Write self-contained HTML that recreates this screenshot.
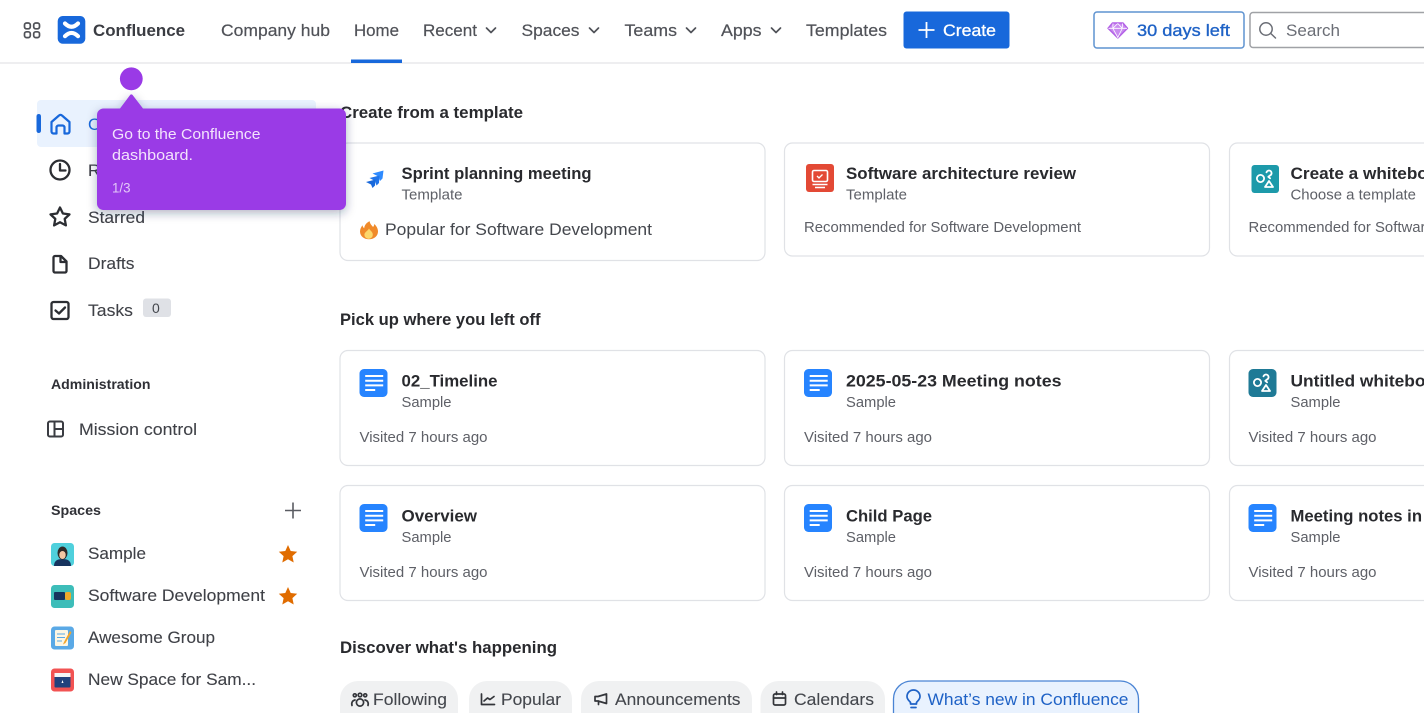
<!DOCTYPE html>
<html><head><meta charset="utf-8"><title>Confluence</title>
<style>
html,body{margin:0;padding:0;background:#fff;overflow:hidden;width:1424px;height:713px}
svg{display:block;filter:blur(.35px)}
text{font-family:"Liberation Sans",sans-serif;font-size:16.5px;fill:#44474d;white-space:pre}
.n{fill:#505258;font-size:17px;stroke:#505258;stroke-width:.2}
.b{font-weight:bold;fill:#292a2e;font-size:16.5px}
.s{fill:#5e6067;font-size:14.5px}
.v{fill:#5e6067;font-size:14.5px}
.m{fill:#3f4147;font-size:17px;stroke:#3f4147;stroke-width:.1}
.h{font-weight:bold;fill:#2f3036;font-size:13.5px}
.c{fill:#44474d;font-size:17px;stroke:#44474d;stroke-width:.1}
.i{fill:none;stroke:#2c2e33;stroke-width:2.300;stroke-linejoin:round;stroke-linecap:round}
.k{fill:none;stroke:#505258;stroke-width:1.700;stroke-linecap:round;stroke-linejoin:round}
.p{fill:#fff;stroke:#e0e2e6;stroke-width:1.200}
.l{fill:none;stroke:#33353a;stroke-width:1.700;stroke-linejoin:round;stroke-linecap:round}
</style></head><body>
<svg width="1424" height="713" viewBox="0 0 1424 713" xmlns="http://www.w3.org/2000/svg">
<defs>
<filter id="sh" x="-20%" y="-20%" width="140%" height="150%"><feDropShadow dx="0" dy="3" stdDeviation="5" flood-color="#1e2a55" flood-opacity=".35"/></filter>
<g id="doc"><rect width="28" height="28" rx="4.500" fill="#2684ff"/><path d="M5.700 7h18M5.700 11.700h18M5.700 16.400h18M5.700 21h10" stroke="#fff" stroke-width="2" fill="none"/></g>
<g id="wb" fill="none" stroke="#fff" stroke-width="1.800" stroke-linejoin="round" stroke-linecap="round"><circle cx="9" cy="13.500" r="3.600"/><path d="M15 7.300a2.600 2.600 0 1 1 3.500 3.200l-1.700 1.300 1.800 1.500"/><path d="M17.500 16l4 6h-8z"/></g>
</defs>

<!-- header -->
<rect x="0" y="62.500" width="1424" height="1" fill="#dcdee2"/>
<g fill="none" stroke="#505258" stroke-width="1.700"><rect x="24.500" y="23" width="5.800" height="5.800" rx="2"/><rect x="33.700" y="23" width="5.800" height="5.800" rx="2"/><rect x="24.500" y="31.800" width="5.800" height="5.800" rx="2"/><rect x="33.700" y="31.800" width="5.800" height="5.800" rx="2"/></g>
<rect x="57.700" y="16" width="27.600" height="27.700" rx="5" fill="#1868db"/>
<path d="M65 23.500Q71.500 30 78 23.500M65 36.200Q71.500 29.700 78 36.200" fill="none" stroke="#fff" stroke-width="4.200" stroke-linecap="round"/>
<text x="93" y="36" textLength="92" lengthAdjust="spacingAndGlyphs" style="font-weight:bold;font-size:17px;fill:#3a3c42">Confluence</text>
<text class="n" x="221" y="36" textLength="109" lengthAdjust="spacingAndGlyphs">Company hub</text>
<text class="n" x="354" y="36" textLength="45" lengthAdjust="spacingAndGlyphs">Home</text>
<rect x="351" y="59.500" width="51" height="3.500" fill="#1868db"/>
<text class="n" x="423" y="36" textLength="54" lengthAdjust="spacingAndGlyphs">Recent</text>
<path class="k" d="M486.500 28l4.500 4.500 4.500-4.500"/>
<text class="n" x="521.500" y="36" textLength="58" lengthAdjust="spacingAndGlyphs">Spaces</text>
<path class="k" d="M589.500 28l4.500 4.500 4.500-4.500"/>
<text class="n" x="624.500" y="36" textLength="52.500" lengthAdjust="spacingAndGlyphs">Teams</text>
<path class="k" d="M686.500 28l4.500 4.500 4.500-4.500"/>
<text class="n" x="721" y="36" textLength="40.500" lengthAdjust="spacingAndGlyphs">Apps</text>
<path class="k" d="M771.500 28l4.500 4.500 4.500-4.500"/>
<text class="n" x="806" y="36" textLength="81" lengthAdjust="spacingAndGlyphs">Templates</text>
<rect x="903.500" y="11.500" width="106" height="37" rx="3" fill="#1868db"/>
<path d="M926.500 22v16M918.500 30h16" stroke="#fff" stroke-width="1.800" fill="none"/>
<text x="943" y="36" textLength="53" lengthAdjust="spacingAndGlyphs" style="fill:#fff;font-size:17px;stroke:#fff;stroke-width:.3">Create</text>
<rect x="1094" y="12" width="150" height="36" rx="3" fill="#fff" stroke="#5f93d0" stroke-width="1.500"/>
<path d="M1112.500 23h10.500l4.500 5.300-9.700 9.700-9.800-9.700z" fill="#c98af0" stroke="#b25fe6" stroke-width="1.400" stroke-linejoin="round"/>
<path d="M1108.500 28.300h18.500M1113 23.500l-.2 4.800 5 9.200 4.500-9.200.2-4.800M1117.800 23.500l-5 4.800M1117.800 23.500l4.500 4.800" fill="none" stroke="#fff" stroke-width=".8"/>
<text x="1137" y="36" textLength="93" lengthAdjust="spacingAndGlyphs" style="fill:#1f62c6;font-size:17px;stroke:#1f62c6;stroke-width:.35">30 days left</text>
<rect x="1250" y="12.500" width="190" height="35" rx="3" fill="#fff" stroke="#a0a2a6" stroke-width="1.500"/>
<circle cx="1266" cy="29" r="6.200" fill="none" stroke="#6b6e76" stroke-width="1.500"/><path d="M1270.800 33.500l4.700 4.500" stroke="#6b6e76" stroke-width="1.500" stroke-linecap="round"/>
<text x="1286" y="36" textLength="54" lengthAdjust="spacingAndGlyphs" style="fill:#6b6e76;font-size:17px">Search</text>

<!-- sidebar -->
<rect x="37" y="100" width="279" height="47" rx="4" fill="#e9f2fe"/>
<rect x="36.500" y="114" width="4.500" height="19" rx="2.200" fill="#1868db"/>
<path d="M51.500 122l7.500-6.500a2.200 2.200 0 0 1 3 0l7.500 6.500v9.500a2 2 0 0 1-2 2H64.500v-6a2 2 0 0 0-2-2h-4a2 2 0 0 0-2 2v6h-3a2 2 0 0 1-2-2z" fill="none" stroke="#1868db" stroke-width="2.200" stroke-linejoin="round"/>
<text x="88" y="130" style="fill:#1868db;font-size:17px">O</text>
<circle cx="60" cy="170" r="9.500" class="i"/><path class="i" d="M60 164v6.500h5.500"/>
<text class="m" x="88" y="176">R</text>
<path class="i" d="M60 207.500l2.900 6 6.600.9-4.800 4.500 1.200 6.500-5.900-3.200-5.900 3.200 1.200-6.500-4.800-4.500 6.600-.9z"/>
<text class="m" x="88" y="223" textLength="57" lengthAdjust="spacingAndGlyphs">Starred</text>
<path class="i" d="M53.500 257.500a1.500 1.500 0 0 1 1.500-1.500h6l5.500 5.500v9.500a1.500 1.500 0 0 1-1.500 1.500h-10a1.500 1.500 0 0 1-1.500-1.500zM60.500 256.500v5.500h5.500"/>
<text class="m" x="88" y="269" textLength="46.500" lengthAdjust="spacingAndGlyphs">Drafts</text>
<rect class="i" x="51.500" y="302" width="17" height="17" rx="2"/><path class="i" d="M55.500 310.500l3.500 3 6-6"/>
<text class="m" x="88" y="316" textLength="45" lengthAdjust="spacingAndGlyphs">Tasks</text>
<rect x="143" y="298.500" width="28" height="18.500" rx="3" fill="#dfe1e6"/>
<text x="152" y="313" style="font-size:14px;fill:#44474d">0</text>
<text class="h" x="51" y="389" textLength="99.500" lengthAdjust="spacingAndGlyphs">Administration</text>
<g fill="none" stroke="#3a3c42" stroke-width="2"><rect x="48" y="421.500" width="15" height="15" rx="1.800"/><path d="M54.500 421.500v15M54.500 429H63"/></g>
<text class="m" x="79" y="435" textLength="118" lengthAdjust="spacingAndGlyphs">Mission control</text>
<text class="h" x="51" y="515" textLength="50" lengthAdjust="spacingAndGlyphs">Spaces</text>
<path d="M293 502.500v16M285 510.500h16" stroke="#5a5c62" stroke-width="1.600" fill="none"/>

<!-- spaces -->
<rect x="51" y="543" width="23" height="23" rx="3.500" fill="#4fd0dc"/>
<path d="M54 566c0-5 3-7 8.500-7s8.500 2 8.500 7z" fill="#17335e"/><ellipse cx="62.500" cy="553" rx="5" ry="6.500" fill="#2e2a28"/><ellipse cx="62.500" cy="555" rx="3.200" ry="4" fill="#f2c7a3"/>
<text class="m" x="88" y="559" textLength="58" lengthAdjust="spacingAndGlyphs">Sample</text>
<path d="M288 545l2.700 6 6.500.7-4.800 4.400 1.300 6.400-5.700-3.300-5.700 3.300 1.300-6.400-4.800-4.400 6.500-.7z" fill="#e06c00"/>
<rect x="51" y="585" width="23" height="23" rx="3.500" fill="#3dbdb9"/>
<rect x="54" y="592" width="11" height="8" rx="1" fill="#17335e"/><rect x="65" y="592" width="6" height="8" rx="2" fill="#f0a92a"/>
<text class="m" x="88" y="601" textLength="177" lengthAdjust="spacingAndGlyphs">Software Development</text>
<path d="M288 587l2.700 6 6.500.7-4.800 4.400 1.300 6.400-5.700-3.300-5.700 3.300 1.300-6.400-4.800-4.400 6.500-.7z" fill="#e06c00"/>
<rect x="51" y="626.500" width="23" height="23" rx="3.500" fill="#5aa9e6"/>
<rect x="55" y="630" width="13" height="16" rx="1" fill="#fdf6e3"/><path d="M57 634h8M57 637.500h8M57 641h5" stroke="#5aa9e6" stroke-width="1"/><path d="M70 631l-6 11-1 2.500 2.500-1.500 6-10.500z" fill="#f2a52b"/>
<text class="m" x="88" y="643" textLength="127" lengthAdjust="spacingAndGlyphs">Awesome Group</text>
<rect x="51" y="668.500" width="23" height="23" rx="3.500" fill="#f25353"/>
<rect x="54.500" y="673" width="16" height="14.500" rx="1" fill="#22427d"/><rect x="54.500" y="673" width="16" height="4" fill="#f4f5f7"/><path d="M62.500 680l-1 3h2z" fill="#fff"/>
<text class="m" x="88" y="685" textLength="168" lengthAdjust="spacingAndGlyphs">New Space for Sam...</text>

<!-- sections -->
<text class="b" x="340" y="118" textLength="183" lengthAdjust="spacingAndGlyphs">Create from a template</text>
<text class="b" x="340" y="325" textLength="200.500" lengthAdjust="spacingAndGlyphs">Pick up where you left off</text>
<text class="b" x="340" y="653" textLength="217" lengthAdjust="spacingAndGlyphs">Discover what's happening</text>

<!-- row 1 -->
<rect class="p" x="340" y="143" width="425" height="117.500" rx="8"/>
<rect class="p" x="784.500" y="143" width="425" height="113" rx="8"/>
<rect class="p" x="1229.500" y="143" width="300" height="113" rx="8"/>
<path d="M372.500 173.500l11-3-1 8-2.500 2.500-1.500-4.500z" fill="#2e8bff"/>
<path d="M369.500 178l10-2.500-.5 7.500-2.500 2.500-1.500-4.500z" fill="#1f74ea"/>
<path d="M366 182l9.500-2.500-.5 6-2.500 2.500-1.500-3.500z" fill="#1868db"/>
<text class="b" x="401.500" y="179" textLength="190" lengthAdjust="spacingAndGlyphs">Sprint planning meeting</text>
<text class="s" x="401.500" y="199.500" textLength="61" lengthAdjust="spacingAndGlyphs">Template</text>
<path d="M369.500 221c.5 3 2.500 4.500 3.500 6 .8-.8 1.200-1.800 1.300-3 2.200 2 3.700 4.500 3.700 7.500 0 4.500-4 7.800-9 7.800s-9-3.300-9-7.800c0-2.500 1.200-4.500 2.500-6.300.2 1.300.7 2.300 1.700 3 .3-3.200 2.300-5.500 5.800-7.200z" fill="#f08a2a"/>
<path d="M369 228.500c1 2 3.800 3.300 3.800 6.200a4.200 4.200 0 0 1-8.400 0c0-2.500 3.100-3.500 4.600-6.200z" fill="#fcd76a"/>
<text x="385" y="235" textLength="267" lengthAdjust="spacingAndGlyphs" style="font-size:17px;fill:#44474d">Popular for Software Development</text>

<rect x="806" y="164" width="28" height="28" rx="3" fill="#e34935"/>
<rect x="812.500" y="170.500" width="15" height="11" rx="1.500" fill="none" stroke="#fff" stroke-width="1.600"/><path d="M817 176l2 2 3.500-3.500" stroke="#fff" stroke-width="1.300" fill="none"/><path d="M812.500 184.500h15M815 187.500h10" stroke="#fff" stroke-width="1.500"/>
<text class="b" x="846" y="179" textLength="230" lengthAdjust="spacingAndGlyphs">Software architecture review</text>
<text class="s" x="846" y="199.500" textLength="61" lengthAdjust="spacingAndGlyphs">Template</text>
<text class="v" x="804" y="232" textLength="277" lengthAdjust="spacingAndGlyphs">Recommended for Software Development</text>

<rect x="1251.500" y="165" width="27.500" height="28" rx="3" fill="#1d9aaa"/><use href="#wb" x="1251.500" y="165"/>
<text class="b" x="1290.500" y="179" textLength="164" lengthAdjust="spacingAndGlyphs">Create a whiteboard</text>
<text class="s" x="1290.500" y="199.500" textLength="125.500" lengthAdjust="spacingAndGlyphs">Choose a template</text>
<text class="v" x="1248.500" y="232" textLength="277" lengthAdjust="spacingAndGlyphs">Recommended for Software Development</text>

<!-- row 2 -->
<rect class="p" x="340" y="350.500" width="425" height="115" rx="8"/>
<rect class="p" x="784.500" y="350.500" width="425" height="115" rx="8"/>
<rect class="p" x="1229.500" y="350.500" width="300" height="115" rx="8"/>
<use href="#doc" x="359.500" y="369"/>
<text class="b" x="401.500" y="386.500" textLength="96" lengthAdjust="spacingAndGlyphs">02_Timeline</text>
<text class="s" x="401.500" y="407" textLength="50" lengthAdjust="spacingAndGlyphs">Sample</text>
<text class="v" x="359.500" y="442" textLength="128" lengthAdjust="spacingAndGlyphs">Visited 7 hours ago</text>
<use href="#doc" x="804" y="369"/>
<text class="b" x="846" y="386.500" textLength="215.500" lengthAdjust="spacingAndGlyphs">2025-05-23 Meeting notes</text>
<text class="s" x="846" y="407" textLength="50" lengthAdjust="spacingAndGlyphs">Sample</text>
<text class="v" x="804" y="442" textLength="128" lengthAdjust="spacingAndGlyphs">Visited 7 hours ago</text>
<rect x="1248.500" y="369" width="28" height="28" rx="4.500" fill="#1f7a96"/><use href="#wb" x="1248.500" y="369"/>
<text class="b" x="1290.500" y="386.500" textLength="162" lengthAdjust="spacingAndGlyphs">Untitled whiteboard</text>
<text class="s" x="1290.500" y="407" textLength="50" lengthAdjust="spacingAndGlyphs">Sample</text>
<text class="v" x="1248.500" y="442" textLength="128" lengthAdjust="spacingAndGlyphs">Visited 7 hours ago</text>

<!-- row 3 -->
<rect class="p" x="340" y="485.500" width="425" height="115" rx="8"/>
<rect class="p" x="784.500" y="485.500" width="425" height="115" rx="8"/>
<rect class="p" x="1229.500" y="485.500" width="300" height="115" rx="8"/>
<use href="#doc" x="359.500" y="504"/>
<text class="b" x="401.500" y="521.500" textLength="75.500" lengthAdjust="spacingAndGlyphs">Overview</text>
<text class="s" x="401.500" y="542" textLength="50" lengthAdjust="spacingAndGlyphs">Sample</text>
<text class="v" x="359.500" y="577" textLength="128" lengthAdjust="spacingAndGlyphs">Visited 7 hours ago</text>
<use href="#doc" x="804" y="504"/>
<text class="b" x="846" y="521.500" textLength="86" lengthAdjust="spacingAndGlyphs">Child Page</text>
<text class="s" x="846" y="542" textLength="50" lengthAdjust="spacingAndGlyphs">Sample</text>
<text class="v" x="804" y="577" textLength="128" lengthAdjust="spacingAndGlyphs">Visited 7 hours ago</text>
<use href="#doc" x="1248.500" y="504"/>
<text class="b" x="1290.500" y="521.500" textLength="131.500" lengthAdjust="spacingAndGlyphs">Meeting notes in</text>
<text class="s" x="1290.500" y="542" textLength="50" lengthAdjust="spacingAndGlyphs">Sample</text>
<text class="v" x="1248.500" y="577" textLength="128" lengthAdjust="spacingAndGlyphs">Visited 7 hours ago</text>

<!-- chips -->
<g fill="#f0f1f2">
<rect x="340" y="681" width="118" height="50" rx="18"/>
<rect x="469" y="681" width="103" height="50" rx="18"/>
<rect x="581" y="681" width="171" height="50" rx="18"/>
<rect x="760.500" y="681" width="124.500" height="50" rx="18"/>
</g>
<rect x="893.500" y="681" width="245" height="50" rx="18" fill="#e9f2fe" stroke="#4a84d4" stroke-width="1.300"/>
<g class="l"><circle cx="360" cy="695" r="1.800"/><circle cx="354.800" cy="695.300" r="1.500"/><circle cx="365.200" cy="695.300" r="1.500"/><circle cx="360" cy="702.500" r="3.600"/><path d="M352 705.500c-.8-2.500.3-5 3-5.500M368 705.500c.8-2.500-.3-5-3-5.500"/></g>
<text class="c" x="373" y="705" textLength="74" lengthAdjust="spacingAndGlyphs">Following</text>
<path class="l" d="M481.500 694v10.500h13M484 701l3.500-3 2.500 1.500 4-3"/>
<text class="c" x="501" y="705" textLength="60" lengthAdjust="spacingAndGlyphs">Popular</text>
<path class="l" d="M595 696.500h3l8.500-2.500v9.500l-8.500-2.500h-3zM598.500 701v3.500"/>
<text class="c" x="615" y="705" textLength="125.500" lengthAdjust="spacingAndGlyphs">Announcements</text>
<g class="l"><rect x="773.500" y="694" width="12" height="11" rx="1.500"/><path d="M773.500 698h12M776.500 692v2.500M782.500 692v2.500"/></g>
<text class="c" x="794" y="705" textLength="80" lengthAdjust="spacingAndGlyphs">Calendars</text>
<path d="M910.500 704v-1.500c-1-1.500-3.500-3-3.500-6a6.500 6.500 0 0 1 13 0c0 3-2.500 4.500-3.500 6v1.500zM911 707.500h5" fill="none" stroke="#1f62c6" stroke-width="1.700" stroke-linejoin="round" stroke-linecap="round"/>
<text x="927.500" y="705" textLength="201" lengthAdjust="spacingAndGlyphs" style="font-size:17px;fill:#1f62c6">What’s new in Confluence</text>

<!-- tooltip -->
<g filter="url(#sh)">
<path d="M103.500 108.500h16.500l10.200-13.600a1.500 1.500 0 0 1 2.300 0l10.500 13.600h196.500a6.500 6.500 0 0 1 6.500 6.500v88.500a6.500 6.500 0 0 1-6.500 6.500H103.500a6.500 6.500 0 0 1-6.500-6.500V115a6.500 6.500 0 0 1 6.500-6.500z" fill="#9a3ae6"/>
</g>
<circle cx="131.300" cy="78.800" r="11.400" fill="#9a3ae6"/>
<text x="112" y="139" textLength="148.500" lengthAdjust="spacingAndGlyphs" style="font-size:15px;fill:#f3e3fc">Go to the Confluence</text>
<text x="112" y="160" textLength="81" lengthAdjust="spacingAndGlyphs" style="font-size:15px;fill:#f3e3fc">dashboard.</text>
<text x="112" y="192.500" textLength="18.500" lengthAdjust="spacingAndGlyphs" style="font-size:13.500px;fill:#e3c8f8">1/3</text>
</svg>
</body></html>
